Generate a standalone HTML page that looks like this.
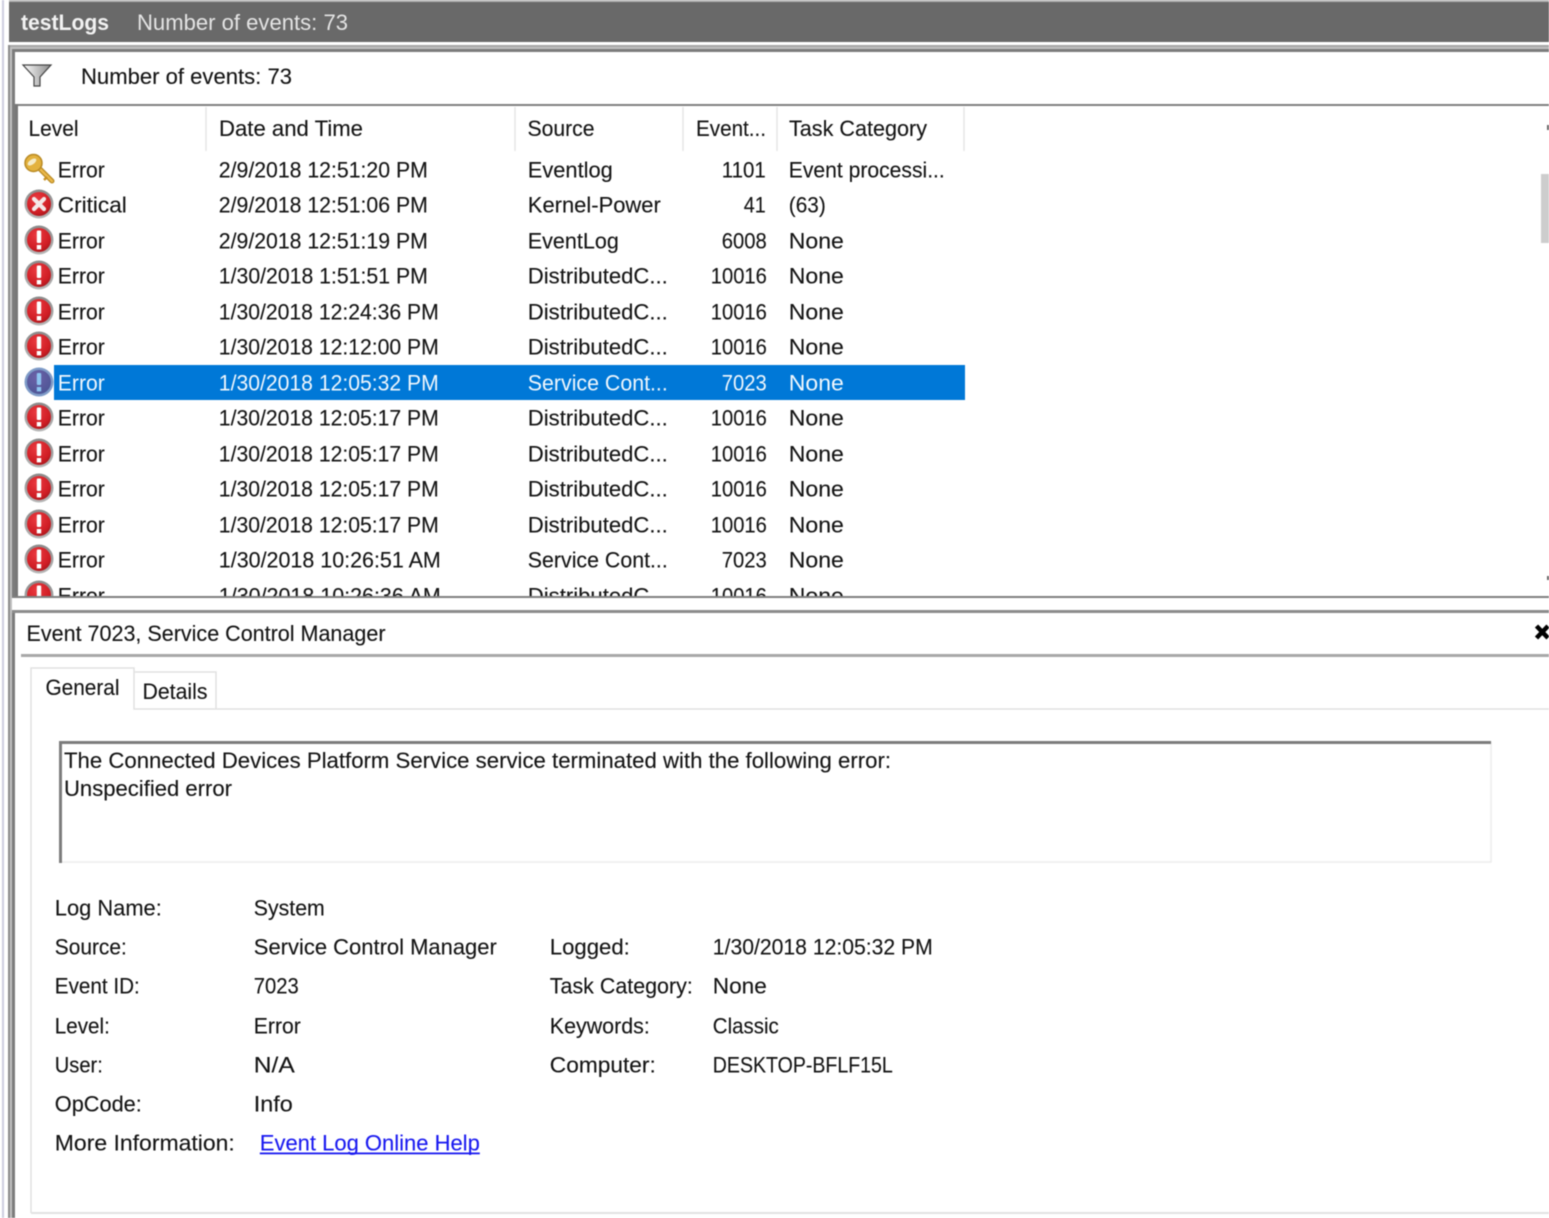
<!DOCTYPE html>
<html><head><meta charset="utf-8"><style>
html,body{margin:0;padding:0;background:#fff;width:1549px;height:1218px;overflow:hidden}
svg{display:block;filter:blur(.45px)}
text{font-family:"Liberation Sans",sans-serif;font-size:22px;fill:#141414;stroke:#141414;stroke-width:.12px}
</style></head><body>
<svg width="1549" height="1218" viewBox="0 0 1549 1218" xmlns="http://www.w3.org/2000/svg">
<defs>
<radialGradient id="r" cx=".4" cy=".3" r=".8"><stop offset="0" stop-color="#ea3a40"/><stop offset=".7" stop-color="#cf1d24"/><stop offset="1" stop-color="#98161a"/></radialGradient>
<radialGradient id="b" cx=".4" cy=".3" r=".8"><stop offset="0" stop-color="#6c62a8"/><stop offset="1" stop-color="#4a5494"/></radialGradient>
<linearGradient id="f" x1="0" y1="0" x2="1" y2="0"><stop offset="0" stop-color="#fff"/><stop offset=".5" stop-color="#c4c4c4"/><stop offset="1" stop-color="#8c8c8c"/></linearGradient>
<linearGradient id="ring" x1="0" y1="0" x2="0" y2="1"><stop offset="0" stop-color="#8a8a8a"/><stop offset="1" stop-color="#b8b8b8"/></linearGradient>
<g id="err"><circle cx="0" cy="0" r="14.5" fill="url(#ring)"/><circle cx="0" cy="0" r="12" fill="url(#r)"/><rect x="-2.2" y="-9.500" width="4.400" height="12.500" rx="1" fill="#fff"/><rect x="-2.200" y="5" width="4.400" height="4.400" fill="#fff"/></g>
</defs>
<rect x="2" y="0" width="2" height="1218" fill="#cdcddf"/>
<rect x="9" y="0" width="1540" height="2" fill="#b4b4b4"/>
<rect x="9" y="2" width="1540" height="40" fill="#696969"/>
<rect x="8" y="45" width="1541" height="2" fill="#a6a6a6"/>
<rect x="10" y="47" width="1539" height="2" fill="#c0c0c0"/>
<rect x="12" y="49" width="1537" height="3" fill="#7c7c7c"/>
<rect x="8" y="45" width="2" height="1173" fill="#8c8c8c"/>
<rect x="10" y="47" width="2" height="1171" fill="#c0c0c0"/>
<rect x="12" y="49" width="3" height="1169" fill="#7c7c7c"/>
<text x="21" y="30" textLength="88" lengthAdjust="spacingAndGlyphs" style="fill:#f2f2f2;stroke:none;font-weight:bold">testLogs</text>
<text x="137" y="30" textLength="211" lengthAdjust="spacingAndGlyphs" style="fill:#e4e4e4;stroke:none">Number of events: 73</text>
<path d="M23 65H51L40 77V86H34V77Z" fill="url(#f)" stroke="#444" stroke-width="1.2"/>
<text x="81" y="84" textLength="211" lengthAdjust="spacingAndGlyphs">Number of events: 73</text>
<rect x="15" y="104" width="1534" height="2" fill="#808080"/>
<rect x="15" y="104" width="3" height="494" fill="#777"/>
<path d="M206 107V151M515 107V151M683 107V151M777 107V151M964 107V151" stroke="#e6e6e6" stroke-width="1.5"/>
<text x="28.500" y="136" textLength="50" lengthAdjust="spacingAndGlyphs">Level</text>
<text x="219" y="136" textLength="144" lengthAdjust="spacingAndGlyphs">Date and Time</text>
<text x="527.500" y="136" textLength="67" lengthAdjust="spacingAndGlyphs">Source</text>
<text x="696" y="136" textLength="70" lengthAdjust="spacingAndGlyphs">Event...</text>
<text x="789" y="136" textLength="138" lengthAdjust="spacingAndGlyphs">Task Category</text>
<rect x="1541" y="174" width="8" height="69" fill="#cdcdcd"/>
<rect x="1547" y="125" width="2" height="5" fill="#666"/>
<rect x="1547" y="576" width="2" height="4" fill="#666"/>
<rect x="54" y="365" width="911" height="35" fill="#0078d7"/>
<!-- key -->
<path d="M40 169L52 181" stroke="#b98a24" stroke-width="5" stroke-linecap="round"/><path d="M40 169L52 181" stroke="#eab84a" stroke-width="2.500" stroke-linecap="round"/><path d="M47 177l-3 3" stroke="#c58f22" stroke-width="2.500"/>
<circle cx="33.500" cy="163" r="8.500" fill="#e3b23e" stroke="#b98a24" stroke-width="1.500"/><ellipse cx="32" cy="162" rx="5" ry="2.500" fill="#f5ecc8" transform="rotate(-35 32 162)"/>
<!-- critical -->
<circle cx="39" cy="204" r="14.500" fill="url(#ring)"/><circle cx="39" cy="204" r="12" fill="url(#r)"/><path d="M34 199L44 209M44 199L34 209" stroke="#f4e8e8" stroke-width="4.200" stroke-linecap="round"/>
<use href="#err" x="39" y="240"/><use href="#err" x="39" y="275"/><use href="#err" x="39" y="311"/><use href="#err" x="39" y="346"/>
<g transform="translate(39 382)"><circle r="14.500" fill="#7f9cc8"/><circle r="12" fill="url(#b)"/><rect x="-2.200" y="-9" width="4.400" height="12" rx="1" fill="#8cc4f0"/><rect x="-2.200" y="5" width="4.400" height="4.400" fill="#8cc4f0"/></g>
<use href="#err" x="39" y="417"/><use href="#err" x="39" y="453"/><use href="#err" x="39" y="488"/><use href="#err" x="39" y="524"/><use href="#err" x="39" y="559"/><use href="#err" x="39" y="595"/>

<g transform="translate(-.2 -.7)">
<text x="58" y="178" textLength="47" lengthAdjust="spacingAndGlyphs">Error</text><text x="219" y="178" textLength="209" lengthAdjust="spacingAndGlyphs">2/9/2018 12:51:20 PM</text><text x="528" y="178" textLength="85" lengthAdjust="spacingAndGlyphs">Eventlog</text><text x="722" y="178" textLength="44" lengthAdjust="spacingAndGlyphs">1101</text><text x="789" y="178" textLength="156" lengthAdjust="spacingAndGlyphs">Event processi...</text>
<text x="58" y="213" textLength="69" lengthAdjust="spacingAndGlyphs">Critical</text><text x="219" y="213" textLength="209" lengthAdjust="spacingAndGlyphs">2/9/2018 12:51:06 PM</text><text x="528" y="213" textLength="133" lengthAdjust="spacingAndGlyphs">Kernel-Power</text><text x="744" y="213" textLength="22" lengthAdjust="spacingAndGlyphs">41</text><text x="789" y="213" textLength="37" lengthAdjust="spacingAndGlyphs">(63)</text>
<text x="58" y="249" textLength="47" lengthAdjust="spacingAndGlyphs">Error</text><text x="219" y="249" textLength="209" lengthAdjust="spacingAndGlyphs">2/9/2018 12:51:19 PM</text><text x="528" y="249" textLength="91" lengthAdjust="spacingAndGlyphs">EventLog</text><text x="722" y="249" textLength="45" lengthAdjust="spacingAndGlyphs">6008</text><text x="789" y="249" textLength="55" lengthAdjust="spacingAndGlyphs">None</text>
<text x="58" y="284" textLength="47" lengthAdjust="spacingAndGlyphs">Error</text><text x="219" y="284" textLength="209" lengthAdjust="spacingAndGlyphs">1/30/2018 1:51:51 PM</text><text x="528" y="284" textLength="140" lengthAdjust="spacingAndGlyphs">DistributedC...</text><text x="711" y="284" textLength="56" lengthAdjust="spacingAndGlyphs">10016</text><text x="789" y="284" textLength="55" lengthAdjust="spacingAndGlyphs">None</text>
<text x="58" y="320" textLength="47" lengthAdjust="spacingAndGlyphs">Error</text><text x="219" y="320" textLength="220" lengthAdjust="spacingAndGlyphs">1/30/2018 12:24:36 PM</text><text x="528" y="320" textLength="140" lengthAdjust="spacingAndGlyphs">DistributedC...</text><text x="711" y="320" textLength="56" lengthAdjust="spacingAndGlyphs">10016</text><text x="789" y="320" textLength="55" lengthAdjust="spacingAndGlyphs">None</text>
<text x="58" y="355" textLength="47" lengthAdjust="spacingAndGlyphs">Error</text><text x="219" y="355" textLength="220" lengthAdjust="spacingAndGlyphs">1/30/2018 12:12:00 PM</text><text x="528" y="355" textLength="140" lengthAdjust="spacingAndGlyphs">DistributedC...</text><text x="711" y="355" textLength="56" lengthAdjust="spacingAndGlyphs">10016</text><text x="789" y="355" textLength="55" lengthAdjust="spacingAndGlyphs">None</text>
<text x="58" y="391" textLength="47" lengthAdjust="spacingAndGlyphs" style="fill:#f0f7fd;stroke:none">Error</text><text x="219" y="391" textLength="220" lengthAdjust="spacingAndGlyphs" style="fill:#f0f7fd;stroke:none">1/30/2018 12:05:32 PM</text><text x="528" y="391" textLength="140" lengthAdjust="spacingAndGlyphs" style="fill:#f0f7fd;stroke:none">Service Cont...</text><text x="722" y="391" textLength="45" lengthAdjust="spacingAndGlyphs" style="fill:#f0f7fd;stroke:none">7023</text><text x="789" y="391" textLength="55" lengthAdjust="spacingAndGlyphs" style="fill:#f0f7fd;stroke:none">None</text>
<text x="58" y="426" textLength="47" lengthAdjust="spacingAndGlyphs">Error</text><text x="219" y="426" textLength="220" lengthAdjust="spacingAndGlyphs">1/30/2018 12:05:17 PM</text><text x="528" y="426" textLength="140" lengthAdjust="spacingAndGlyphs">DistributedC...</text><text x="711" y="426" textLength="56" lengthAdjust="spacingAndGlyphs">10016</text><text x="789" y="426" textLength="55" lengthAdjust="spacingAndGlyphs">None</text>
<text x="58" y="462" textLength="47" lengthAdjust="spacingAndGlyphs">Error</text><text x="219" y="462" textLength="220" lengthAdjust="spacingAndGlyphs">1/30/2018 12:05:17 PM</text><text x="528" y="462" textLength="140" lengthAdjust="spacingAndGlyphs">DistributedC...</text><text x="711" y="462" textLength="56" lengthAdjust="spacingAndGlyphs">10016</text><text x="789" y="462" textLength="55" lengthAdjust="spacingAndGlyphs">None</text>
<text x="58" y="497" textLength="47" lengthAdjust="spacingAndGlyphs">Error</text><text x="219" y="497" textLength="220" lengthAdjust="spacingAndGlyphs">1/30/2018 12:05:17 PM</text><text x="528" y="497" textLength="140" lengthAdjust="spacingAndGlyphs">DistributedC...</text><text x="711" y="497" textLength="56" lengthAdjust="spacingAndGlyphs">10016</text><text x="789" y="497" textLength="55" lengthAdjust="spacingAndGlyphs">None</text>
<text x="58" y="533" textLength="47" lengthAdjust="spacingAndGlyphs">Error</text><text x="219" y="533" textLength="220" lengthAdjust="spacingAndGlyphs">1/30/2018 12:05:17 PM</text><text x="528" y="533" textLength="140" lengthAdjust="spacingAndGlyphs">DistributedC...</text><text x="711" y="533" textLength="56" lengthAdjust="spacingAndGlyphs">10016</text><text x="789" y="533" textLength="55" lengthAdjust="spacingAndGlyphs">None</text>
<text x="58" y="568" textLength="47" lengthAdjust="spacingAndGlyphs">Error</text><text x="219" y="568" textLength="222" lengthAdjust="spacingAndGlyphs">1/30/2018 10:26:51 AM</text><text x="528" y="568" textLength="140" lengthAdjust="spacingAndGlyphs">Service Cont...</text><text x="722" y="568" textLength="45" lengthAdjust="spacingAndGlyphs">7023</text><text x="789" y="568" textLength="55" lengthAdjust="spacingAndGlyphs">None</text>
<text x="58" y="604" textLength="47" lengthAdjust="spacingAndGlyphs">Error</text><text x="219" y="604" textLength="222" lengthAdjust="spacingAndGlyphs">1/30/2018 10:26:36 AM</text><text x="528" y="604" textLength="140" lengthAdjust="spacingAndGlyphs">DistributedC...</text><text x="711" y="604" textLength="56" lengthAdjust="spacingAndGlyphs">10016</text><text x="789" y="604" textLength="55" lengthAdjust="spacingAndGlyphs">None</text>
</g>

<rect x="12" y="597" width="1537" height="621" fill="#fff"/>
<rect x="12" y="596" width="1537" height="2" fill="#808080"/>
<rect x="12" y="610" width="1537" height="3" fill="#8c8c8c"/>
<rect x="12" y="613" width="3" height="605" fill="#7c7c7c"/>
<text x="26.500" y="641" textLength="359" lengthAdjust="spacingAndGlyphs">Event 7023, Service Control Manager</text>
<path d="M1536.500 626L1548 638M1548 626L1536.500 638" stroke="#000" stroke-width="4.500"/>
<rect x="21" y="654" width="1528" height="3" fill="#a8a8a8"/>
<!-- tabs -->
<path d="M31 1213V668H134V709H1549M134 672H216V709" fill="none" stroke="#e2e2e2" stroke-width="1.500"/>
<path d="M31 1213H1549" stroke="#e2e2e2" stroke-width="2"/>
<text x="45.500" y="695" textLength="74" lengthAdjust="spacingAndGlyphs">General</text>
<text x="142.500" y="699" textLength="65" lengthAdjust="spacingAndGlyphs">Details</text>
<!-- message box -->
<rect x="60" y="742" width="1431" height="120" fill="#fff" stroke="#ececec" stroke-width="1.500"/>
<rect x="59" y="741" width="1432" height="3" fill="#7c7c7c"/>
<rect x="59" y="741" width="3" height="122" fill="#7c7c7c"/>
<text x="64" y="768" textLength="827" lengthAdjust="spacingAndGlyphs">The Connected Devices Platform Service service terminated with the following error:</text>
<text x="64" y="796" textLength="168" lengthAdjust="spacingAndGlyphs">Unspecified error</text>
<!-- details -->
<g transform="translate(-.2 -.5)">
<text x="55" y="916" textLength="107" lengthAdjust="spacingAndGlyphs">Log Name:</text><text x="254" y="916" textLength="71" lengthAdjust="spacingAndGlyphs">System</text>
<text x="55" y="955" textLength="72" lengthAdjust="spacingAndGlyphs">Source:</text><text x="254" y="955" textLength="243" lengthAdjust="spacingAndGlyphs">Service Control Manager</text><text x="550" y="955" textLength="80" lengthAdjust="spacingAndGlyphs">Logged:</text><text x="713" y="955" textLength="220" lengthAdjust="spacingAndGlyphs">1/30/2018 12:05:32 PM</text>
<text x="55" y="994" textLength="85" lengthAdjust="spacingAndGlyphs">Event ID:</text><text x="254" y="994" textLength="45" lengthAdjust="spacingAndGlyphs">7023</text><text x="550" y="994" textLength="143" lengthAdjust="spacingAndGlyphs">Task Category:</text><text x="713" y="994" textLength="54" lengthAdjust="spacingAndGlyphs">None</text>
<text x="55" y="1034" textLength="55" lengthAdjust="spacingAndGlyphs">Level:</text><text x="254" y="1034" textLength="47" lengthAdjust="spacingAndGlyphs">Error</text><text x="550" y="1034" textLength="100" lengthAdjust="spacingAndGlyphs">Keywords:</text><text x="713" y="1034" textLength="66" lengthAdjust="spacingAndGlyphs">Classic</text>
<text x="55" y="1073" textLength="48" lengthAdjust="spacingAndGlyphs">User:</text><text x="254" y="1073" textLength="41" lengthAdjust="spacingAndGlyphs">N/A</text><text x="550" y="1073" textLength="106" lengthAdjust="spacingAndGlyphs">Computer:</text><text x="713" y="1073" textLength="180" lengthAdjust="spacingAndGlyphs">DESKTOP-BFLF15L</text>
<text x="55" y="1112" textLength="87" lengthAdjust="spacingAndGlyphs">OpCode:</text><text x="254" y="1112" textLength="39" lengthAdjust="spacingAndGlyphs">Info</text>
<text x="55" y="1151" textLength="180" lengthAdjust="spacingAndGlyphs">More Information:</text>
<text x="260" y="1151" textLength="220" lengthAdjust="spacingAndGlyphs" style="fill:#1a1af0;stroke:#1a1af0">Event Log Online Help</text>
<rect x="260" y="1153" width="220" height="1.800" fill="#1a1af0"/>
</g>
</svg>
</body></html>
